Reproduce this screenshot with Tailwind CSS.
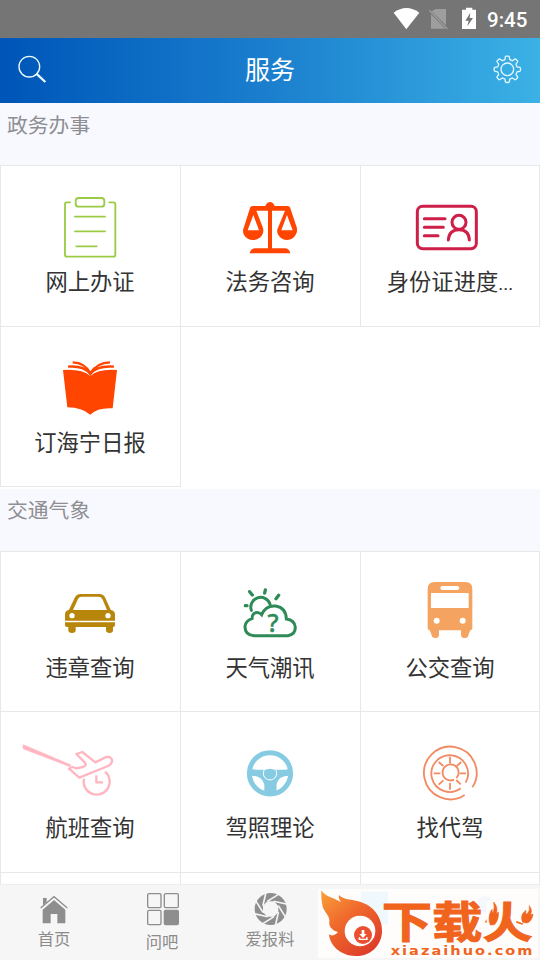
<!DOCTYPE html>
<html lang="zh-CN">
<head>
<meta charset="utf-8">
<title>服务</title>
<script src="https://cdn.jsdelivr.net/npm/@tailwindcss/browser@4"></script>
</head>
<body class="bg-white">
<div class="relative flex h-[960px] w-[540px] flex-col overflow-hidden bg-white font-['Noto_Sans_CJK_SC',sans-serif] text-[#333]">
  <div class="flex h-[38px] shrink-0 items-start justify-end bg-[#757575] pr-[12px]">
    <svg class="h-[37px] w-[90px]" viewBox="360 0 270 111" fill="#fff">
      <path d="M371 38Q409 10 448 38L409 88Z"/>
      <path d="M497 27H528V76L485 34ZM483 43L526 86H483Z" fill="#9e9e9e"/>
      <path d="M478 31L532 87" stroke="#9e9e9e" stroke-width="4"/>
      <path fill-rule="evenodd" d="M588 23H607V29H618V87H576V29H588ZM601 38L586 62H596L592 79L609 54H599Z"/>
    </svg>
    <div class="ml-[7px] w-[41px] whitespace-nowrap font-['Roboto',sans-serif] text-[20.5px] leading-[40px] font-medium text-white">9:45</div>
  </div>
  <header class="flex h-[65px] shrink-0 items-center justify-between bg-linear-to-r from-[#0055b8] via-[#1b7fce] to-[#3bb1e5]">
    <svg class="h-[65px] w-[60px]" viewBox="0 114 180 195" fill="none" stroke="#e9faff">
      <circle cx="88" cy="200" r="31" stroke-width="4"/><path d="M109 221L136 246" stroke-width="7"/>
    </svg>
    <h1 class="pb-[6px] text-[25px] leading-[56px] font-normal text-white">服务</h1>
    <svg class="h-[65px] w-[60px]" viewBox="630 114 180 195" fill="none" stroke="#e3f8ff" stroke-width="4">
      <defs><path id="tooth" d="M-11.8 -28.4C-7 -26.500 -6.500 -31 -6.500 -35Q-6.500 -39.500 -3 -39.500H3Q6.500 -39.500 6.500 -35C6.500 -31 7 -26.500 11.800 -28.400"/></defs>
      <g transform="translate(712 208)"><circle r="19"/>
        <use href="#tooth"/><use href="#tooth" transform="rotate(45)"/><use href="#tooth" transform="rotate(90)"/><use href="#tooth" transform="rotate(135)"/><use href="#tooth" transform="rotate(180)"/><use href="#tooth" transform="rotate(225)"/><use href="#tooth" transform="rotate(270)"/><use href="#tooth" transform="rotate(315)"/>
      </g>
    </svg>
  </header>

  <h2 class="h-[62px] shrink-0 bg-[#f8f9ff] pl-[7px] text-[20.8px] leading-[42px] text-[#8e8e93]">政务办事</h2>
  <section class="grid h-[324px] shrink-0 grid-cols-3 grid-rows-[161px_161px]">
    <div class="border border-r-0 border-b-0 border-[#e8e8e8]">
      <svg class="-ml-px h-[100px] w-[180px]" viewBox="0 -12 540 300" fill="none" stroke="#9acb45" stroke-width="5.5" stroke-linecap="round">
        <path d="M210 97H200Q195 97 195 103V254Q195 260 201 260H340Q346 260 346 254V103Q346 97 340 97H328"/>
        <rect x="227" y="84" width="86" height="26" rx="9"/>
        <path d="M225 140H315M225 184H315M229 229H290"/>
      </svg>
      <div class="-ml-px -mt-[2px] text-center text-[22.3px] leading-[32px]">网上办证</div>
    </div>
    <div class="border border-r-0 border-b-0 border-[#e8e8e8]">
      <svg class="-ml-px h-[100px] w-[180px]" viewBox="540 -12 540 300" fill="#ff4500">
        <path d="M750 114Q751 108 758 108H796Q800 97 810 96Q820 97 824 108H862Q870 108 871 115L887 163Q895 180 888 193Q879 210 862 210Q844 210 835 195Q828 183 835 171L855 122H816V235H856Q868 236 871 250H749Q752 236 764 235H804V122H769L788 171Q793 184 786 196Q776 210 760 210Q741 210 732 195Q726 183 732 171Z"/>
        <path fill="#fff" d="M760 135L743 181H777ZM861 135L844 181H878Z"/>
      </svg>
      <div class="-ml-px -mt-[2px] text-center text-[22.3px] leading-[32px]">法务咨询</div>
    </div>
    <div class="border border-b-0 border-[#e8e8e8]">
      <svg class="-ml-px h-[100px] w-[180px]" viewBox="270 -12 540 300" fill="none" stroke="#cd1f47" stroke-width="9" stroke-linecap="round">
        <rect x="442" y="109" width="177" height="127" rx="16"/>
        <path d="M463 146H525M463 172H520M463 197H504"/>
        <circle cx="567" cy="157" r="21"/><path d="M535 210Q537 179 567 179Q597 179 598 210"/>
      </svg>
      <div class="-mt-[2px] text-center text-[22.3px] leading-[32px]">身份证进度<span class="font-['Roboto'] text-[19px]">...</span></div>
    </div>
    <div class="w-[181px] border border-[#e8e8e8]">
      <svg class="-ml-px h-[100px] w-[180px]" viewBox="0 -9 540 300" fill="#ff4500">
        <path d="M189 120Q246 116 271 138Q295 116 351 120L338 235Q294 232 271 254Q246 233 202 232Z"/>
        <path d="M199 116Q249 112 271 131Q292 112 342 116" fill="none" stroke="#fff" stroke-width="3"/>
        <g fill="none" stroke="#ff4500" stroke-width="7"><path d="M204 110Q252 106 271 132Q290 106 342 110"/><path d="M218 97Q255 98 271 130Q290 98 330 97"/></g>
      </svg>
      <div class="-ml-px -mt-[2px] text-center text-[22.3px] leading-[32px]">订海宁日报</div>
    </div>
    <div class="col-span-2 border-t border-[#e8e8e8]"></div>
  </section>

  <h2 class="h-[62px] shrink-0 bg-[#f8f9ff] pl-[7px] text-[20.8px] leading-[41px] text-[#8e8e93]">交通气象</h2>
  <section class="grid h-[333px] shrink-0 grid-cols-3 grid-rows-[160px_161px_12px] overflow-hidden">
    <div class="border border-r-0 border-b-0 border-[#e8e8e8]">
      <svg class="-ml-px h-[100px] w-[180px]" viewBox="0 -24 540 300" fill="#b8860b">
        <path fill-rule="evenodd" d="M195 182V162Q196 152 207 149L224 114Q229 102 242 102H298Q311 102 316 114L332 149Q344 152 345 162V182ZM219 150H321L307 117Q304 110 295 110H245Q237 110 234 117Z"/>
        <path d="M195 187H345V196Q345 201 339 201V211Q339 219 329 219Q318 219 318 211V201H227V211Q227 219 216 219Q205 219 205 211V201H201Q195 201 195 196Z"/>
        <circle cx="216" cy="167" r="8" fill="#fff"/><circle cx="324" cy="167" r="8" fill="#fff"/>
      </svg>
      <div class="-ml-px -mt-[2px] text-center text-[22.3px] leading-[32px]">违章查询</div>
    </div>
    <div class="border border-r-0 border-b-0 border-[#e8e8e8]">
      <svg class="-ml-px h-[100px] w-[180px]" viewBox="540 -24 540 300" fill="none" stroke="#2e8b57" stroke-width="9" stroke-linecap="round">
        <path d="M762 227Q734 225 735 199Q737 182 756 176Q756 156 775 158Q780 158 785 164Q797 135 827 138Q858 143 859 177Q884 180 886 202Q886 224 864 227Z"/>
        <path d="M754 151A29 29 0 0 1 810 132"/>
        <path d="M749 95L757 105M796 90L794 99M736 137H741M836 106L828 116" stroke-width="10"/>
        <text x="819" y="215" text-anchor="middle" fill="#2e8b57" stroke="#2e8b57" stroke-width="1.5" font-family="'Noto Sans', sans-serif" font-weight="500" font-size="74">?</text>
      </svg>
      <div class="-ml-px -mt-[2px] text-center text-[22.3px] leading-[32px]">天气潮讯</div>
    </div>
    <div class="border border-b-0 border-[#e8e8e8]">
      <svg class="-ml-px h-[100px] w-[180px]" viewBox="270 -24 540 300" fill="#f4a460">
        <path d="M473 87Q473 66 494 66H586Q607 66 607 87V205Q607 210 601 211L596 222Q595 234 585 234Q573 234 573 224V211H507V224Q507 234 495 234Q485 234 484 222L479 211Q473 210 473 205Z"/>
        <g fill="#fff"><rect x="511" y="78" width="57" height="12" rx="6"/><rect x="483" y="99" width="113" height="45"/><circle cx="500" cy="182" r="9"/><circle cx="578" cy="182" r="9"/></g>
      </svg>
      <div class="-mt-[2px] text-center text-[22.3px] leading-[32px]">公交查询</div>
    </div>
    <div class="border border-r-0 border-b-0 border-[#e8e8e8]">
      <svg class="-ml-px h-[100px] w-[180px]" viewBox="0 -24 540 300" fill="none" stroke="#ffb6c1" stroke-width="7" stroke-linejoin="round">
        <path d="M71 74L214 135L209 140L70 87Q65 79 71 74Z" fill="#ffb6c1" stroke-width="1"/>
        <path d="M207 146L238 173L324 138Q340 129 335 117Q329 107 316 112L286 127L247 96L229 102L255 128Q261 137 249 141L228 145Q218 137 207 146Z"/>
        <path d="M252 176A39 39 0 1 0 315 155M289 166V187H309"/>
      </svg>
      <div class="-ml-px -mt-[2px] text-center text-[22.3px] leading-[32px]">航班查询</div>
    </div>
    <div class="border border-r-0 border-b-0 border-[#e8e8e8]">
      <svg class="-ml-px h-[100px] w-[180px]" viewBox="540 -24 540 300" fill="#87cbe3">
        <circle cx="810" cy="160" r="62" fill="none" stroke="#87cbe3" stroke-width="15"/>
        <path d="M750 146Q778 153 810 146Q842 153 870 146V167Q836 166 830 191L829 222H793V194Q786 166 750 167Z"/>
        <circle cx="810" cy="160" r="20" fill="none" stroke="#fff" stroke-width="3"/>
      </svg>
      <div class="-ml-px -mt-[2px] text-center text-[22.3px] leading-[32px]">驾照理论</div>
    </div>
    <div class="border border-b-0 border-[#e8e8e8]">
      <svg class="-ml-px h-[100px] w-[180px]" viewBox="270 -24 540 300" fill="none" stroke="#f28b63" stroke-width="5.5">
        <path d="M584 225A79 79 0 1 1 607 202"/>
        <path d="M572 205A55 55 0 1 1 587 188"/>
        <path d="M552 179A24 24 0 1 1 559 174"/>
        <path d="M540 110V131M540 189V209M491 160H511M569 160H588M506 126L520 138M574 126L560 138M506 194L520 181M559 180L572 193"/>
      </svg>
      <div class="-mt-[2px] text-center text-[22.3px] leading-[32px]">找代驾</div>
    </div>
    <div class="border border-r-0 border-b-0 border-[#e8e8e8]"></div>
    <div class="border border-r-0 border-b-0 border-[#e8e8e8]"></div>
    <div class="border border-b-0 border-[#e8e8e8]"></div>
  </section>

  <nav class="grid h-[76px] shrink-0 grid-cols-5 border-t border-[#eee] bg-[#f6f6f6] text-center text-[16.3px] leading-[22px] text-[#8b8b8b]">
    <div>
      <svg class="h-[42px] w-full" viewBox="0 60 324 126" fill="#8e8e8e">
        <path d="M128 134L162 105L196 134V175H172V147H152V175H128ZM129 99H140V111L129 121Z"/>
        <path d="M122 129L162 95L202 129" fill="none" stroke="#8e8e8e" stroke-width="4"/>
      </svg>
      <div>首页</div>
    </div>
    <div>
      <svg class="h-[45px] w-full" viewBox="324 60 324 135" fill="none" stroke="#8e8e8e" stroke-width="4">
        <rect x="443" y="86" width="40" height="42" rx="4"/><rect x="493" y="86" width="42" height="42" rx="4"/><rect x="443" y="136" width="40" height="43" rx="4"/><rect x="493" y="136" width="42" height="43" rx="4" fill="#8e8e8e"/>
      </svg>
      <div>问吧</div>
    </div>
    <div>
      <svg class="h-[42px] w-full" viewBox="648 60 324 126">
        <defs><path id="blade" d="M-10 -23L28 -47"/></defs>
        <g transform="translate(812 132)"><circle r="48" fill="#8e8e8e"/><path d="M-10 -23L10 -23L23 -9V10L10 23H-10L-23 10V-10Z" fill="#f6f6f6"/>
        <g stroke="#f6f6f6" stroke-width="5"><use href="#blade"/><use href="#blade" transform="rotate(45)"/><use href="#blade" transform="rotate(90)"/><use href="#blade" transform="rotate(135)"/><use href="#blade" transform="rotate(180)"/><use href="#blade" transform="rotate(225)"/><use href="#blade" transform="rotate(270)"/><use href="#blade" transform="rotate(315)"/></g></g>
      </svg>
      <div>爱报料</div>
    </div>
    <div></div>
    <div></div>
  </nav>

  <svg class="absolute top-[889px] left-[318px] h-[69px] w-[220px]" viewBox="24 72 660 207">
    <defs><linearGradient id="fire" x1="0" y1="0" x2=".75" y2="1"><stop stop-color="#f9a13b"/><stop offset=".45" stop-color="#f06a2c"/><stop offset="1" stop-color="#dd3c29"/></linearGradient></defs>
    <rect x="24" y="72" width="660" height="207" fill="#fffdfc"/>
    <path d="M154 80H234V178H154Z" fill="#eef8fd"/><circle cx="525" cy="118" r="25" fill="#f4f8fb"/>
    <path d="M34 76C45 95 67 96 94 112Q84 101 87 90C102 107 131 102 158 113C195 126 219 164 216 203C212 245 180 273 137 273C92 273 58 240 57 207C64 215 75 211 84 201C66 196 56 184 58 170C60 155 47 145 39 128Q33 110 34 76Z" fill="url(#fire)"/>
    <circle cx="150" cy="198" r="46" fill="#fff"/><circle cx="159" cy="210" r="27" fill="#ea5030"/>
    <path d="M155 195H163V207H170L159 219L148 207H155ZM146 217V225H173V217H168V221H151V217Z" fill="#fff"/>
    <g fill="#f0641e" font-family="'Noto Sans CJK SC', sans-serif" font-weight="700">
      <text transform="translate(215 218) scale(1.18 1)" font-size="128" textLength="384" lengthAdjust="spacingAndGlyphs" stroke="#f0641e" stroke-width="3">下载火</text>
      <path d="M530 108H570L567 176L530 184ZM623 106H674V166L645 178L620 168Z" fill="#fffdfc"/>
      <text transform="translate(242 270) scale(1.12 1)" font-family="'DejaVu Sans', sans-serif" font-weight="700" font-size="39" textLength="380" lengthAdjust="spacing">xiazaihuo.com</text>
    </g>
    <path d="M541 180C534 163 537 147 546 133Q546 141 549 144Q555 130 551 111Q566 128 558 147L565 141Q567 165 553 179ZM638 172C631 154 637 145 648 136Q645 147 651 148Q661 138 658 122Q669 138 660 150L669 147Q665 171 650 174Z" fill="#f0641e" stroke="#f0641e" stroke-width="2"/>
  </svg>
</div>
</body>
</html>
